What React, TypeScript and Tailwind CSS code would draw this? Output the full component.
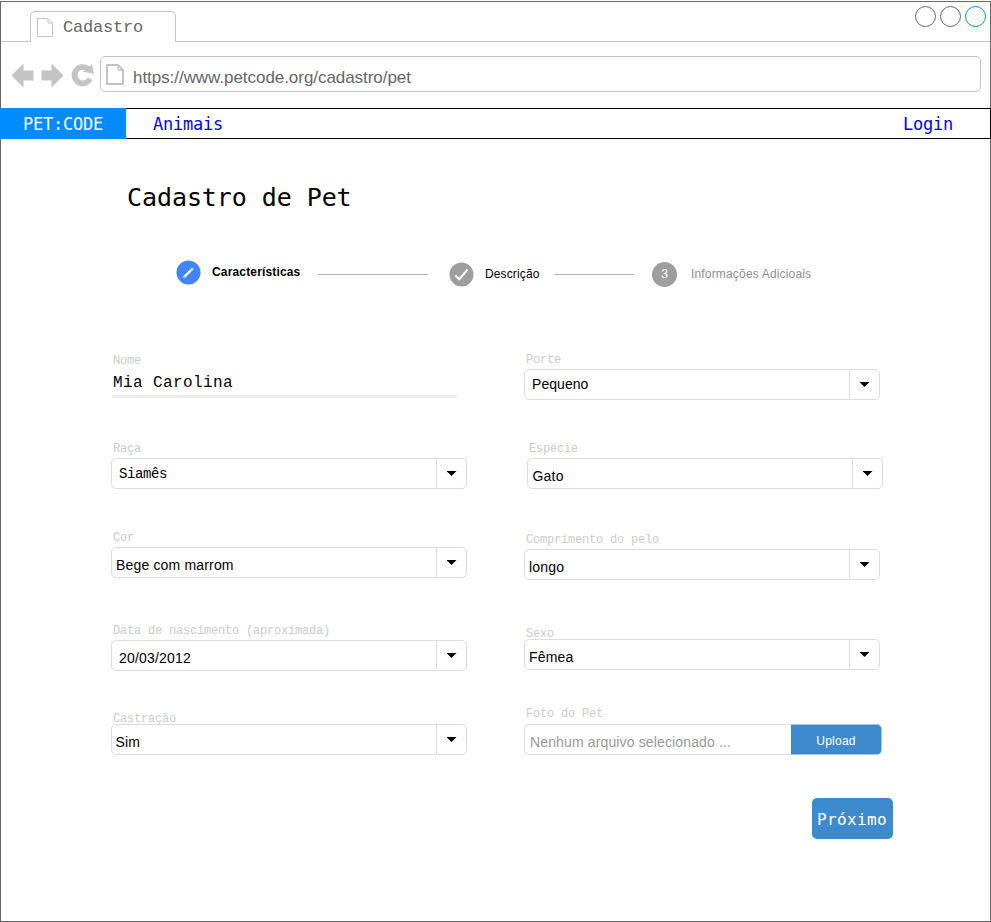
import type { ReactNode } from "react";

const sans = "font-['Liberation_Sans',sans-serif]";
const mono = "font-['Liberation_Mono',monospace]";
const dejavu = "font-['DejaVu_Sans_Mono',monospace]";

type FieldProps = {
  label: string;
  gap: string;
  labelHeight?: string;
  labelPad?: string;
  children: ReactNode;
};

function Field({ label, gap, labelHeight = "h-[15px]", labelPad = "pl-[2px]", children }: FieldProps) {
  return (
    <div className={gap}>
      <div className={`${mono} ${labelHeight} ${labelPad} text-[12px] leading-[12px] tracking-[-0.2px] whitespace-nowrap text-[#cccccc]`}>
        {label}
      </div>
      {children}
    </div>
  );
}

type SelectProps = { value: string; text?: string; font?: string; box?: string };

function Select({ value, text = "pl-1 pt-[9px] tracking-[0.17px]", font = sans, box = "" }: SelectProps) {
  return (
    <div className={`flex h-[31px] w-[356px] rounded-[5px] border border-[#dddddd] text-black ${box}`}>
      <div className={`${font} ${text} flex-1 text-[14px] leading-[16px] whitespace-nowrap`}>{value}</div>
      <div className="flex w-[30px] border-l border-[#dddddd] pt-[12px] pl-[10px]">
        <svg width="10" height="5" viewBox="0 0 10 5">
          <path d="M-.5 0H9.500L4.500 5Z" fill="#000" />
        </svg>
      </div>
    </div>
  );
}

function Header() {
  return (
    <header>
      <div className="flex h-[40px]">
        <div className="w-[29px] border-b border-[#c4c4c4]" />
        <div className="mt-[9px] flex w-[146px] rounded-t-[5px] border border-b-0 border-[#c4c4c4] pt-[6px] pl-[6px]">
          <svg width="17" height="20" viewBox="0 0 17 20" fill="none" stroke="#c4c4c4">
            <path d="M.5 .5H11L15.500 5V18.500H.5ZM11 .5V5H15.500" />
          </svg>
          <span className={`${mono} ml-[9px] text-[17px] leading-[20px] tracking-[-0.2px] text-[#666666]`}>Cadastro</span>
        </div>
        <div className="flex flex-1 justify-end gap-1 border-b border-[#c4c4c4] pt-[4px] pr-[4px]">
          <span className="size-[21px] rounded-full border border-[#666666]" />
          <span className="size-[21px] rounded-full border border-[#666666]" />
          <span className="size-[21px] rounded-full border border-[#008cff]" />
        </div>
      </div>
      <div className="flex pt-[14px] pl-[10px]">
        <svg className="mt-[6px]" width="83" height="28" viewBox="0 0 83 28" fill="#c4c4c4">
          <path d="M.5 13.500L12.500 1.500V8.500H22.500V18.500H12.500V25.500Z" />
          <path d="M52.500 13.500L40.500 1.500V8.500H30.500V18.500H40.500V25.500Z" />
          <path d="M80.800 2.500L82.800 12L71.500 9.500L74.200 8.200A5.400 5.400 0 1 0 76.800 15.500L81.500 18A11 11 0 1 1 78.500 4.600Z" />
        </svg>
        <div className="ml-[6px] flex h-[36px] w-[881px] rounded-[5px] border border-[#c4c4c4] pt-[7px] pl-[5px]">
          <svg width="18" height="21" viewBox="0 0 18 21" fill="none" stroke="#c4c4c4" strokeWidth="2">
            <path d="M1 1H12L17 6V20H1Z" />
            <path d="M12 1V6H17" strokeWidth="1.300" />
          </svg>
          <span className={`${sans} ml-[9px] pt-[4px] text-[17px] leading-[20px] tracking-[-0.05px] text-[#666666]`}>
            https://www.petcode.org/cadastro/pet
          </span>
        </div>
      </div>
    </header>
  );
}

function Nav() {
  return (
    <nav className={`${dejavu} -mx-px mt-[16px] flex h-[31px] text-[17px] leading-[32px] tracking-[-0.23px]`}>
      <div className="w-[126px] bg-[#008cff] pl-[23px] text-white">PET:CODE</div>
      <div className="flex flex-1 justify-between border-y border-r border-black pr-[37px] pl-[27px] leading-[30px] text-[#0000ff]">
        <a>Animais</a>
        <a>Login</a>
      </div>
    </nav>
  );
}

function Steps() {
  return (
    <div className={`${sans} mt-[43px] ml-[175px] flex h-[30px] text-[12px] leading-[14px] whitespace-nowrap`}>
      <svg className="mt-[4px]" width="25" height="25" viewBox="0 0 25 25">
        <circle cx="12.500" cy="12.500" r="12" fill="#4285f4" />
        <path d="M8.600 16.600L15 10.200M15.300 9.900L16.700 8.500" stroke="#fff" strokeWidth="2.300" />
        <path d="M7.300 17.800V15.600L9.500 17.600Z" fill="#fff" />
      </svg>
      <span className="mt-[9px] ml-[11px] w-[106px] font-bold tracking-[0.16px] text-black">Características</span>
      <div className="mt-[18px] h-px w-[110px] bg-[#b3b3b3]" />
      <svg className="mt-[6px] ml-[21px]" width="25" height="25" viewBox="0 0 25 25">
        <circle cx="12.500" cy="12.500" r="12" fill="#9e9e9e" />
        <path d="M6.300 13.500L10.300 17.300L18.500 7.500" fill="none" stroke="#fff" strokeWidth="2" />
      </svg>
      <span className="mt-[11px] ml-[11px] w-[69px] tracking-[0.13px] text-black">Descrição</span>
      <div className="mt-[18px] h-px w-[80px] bg-[#b3b3b3]" />
      <div className="mt-[6px] ml-[18px] size-[25px] rounded-full bg-[#9e9e9e] text-center leading-[25px] text-white">3</div>
      <span className="mt-[11px] ml-[14px] tracking-[0.17px] text-[#8f8f8f]">Informações Adicioais</span>
    </div>
  );
}

export default function App() {
  return (
    <div className="h-[922px] w-[991px] bg-white pt-px">
      <div className="h-[921px] border border-[#666666]">
        <Header />
        <Nav />
        <h1 className={`${dejavu} mt-[44px] ml-[126px] text-[25px] leading-[30px] tracking-[-0.08px] text-black`}>Cadastro de Pet</h1>
        <Steps />
        <form className="mt-[69px] flex pl-[110px]">
          <div className="w-[413px]">
            <Field label="Nome" gap="">
              <div className={`${mono} ml-px h-[28px] w-[345px] border-b-3 border-[#eeeeee] pt-[4px] pl-px text-[16px] leading-[18px] tracking-[0.4px] text-black`}>
                Mia Carolina
              </div>
            </Field>
            <Field label="Raça" gap="mt-[45px]">
              <Select value="Siamês" font={mono} text="pl-[7px] pt-[7px] tracking-[-0.4px]" />
            </Field>
            <Field label="Cor" gap="mt-[43px]">
              <Select value="Bege com marrom" />
            </Field>
            <Field label="Data de nascimento (aproximada)" gap="mt-[47px]">
              <Select value="20/03/2012" text="pl-[7px] pt-[9px] tracking-[0.2px]" />
            </Field>
            <Field label="Castração" gap="mt-[42px]" labelHeight="h-[11px]">
              <Select value="Sim" box="-ml-[0.5px]" />
            </Field>
          </div>
          <div className="-mt-px">
            <Field label="Porte" gap="">
              <Select value="Pequeno" text="pl-[7px] pt-[6px] tracking-[0.05px]" />
            </Field>
            <Field label="Espécie" gap="mt-[43px]" labelPad="pl-[5px]">
              <Select value="Gato" text="pl-[5px] pt-[9px] tracking-[0.2px]" box="ml-[2.5px]" />
            </Field>
            <Field label="Comprimento do pelo" gap="mt-[45px]">
              <Select value="longo" />
            </Field>
            <Field label="Sexo" gap="mt-[48px]" labelHeight="h-[11px]">
              <Select value="Fêmea" />
            </Field>
            <Field label="Foto do Pet" gap="mt-[38px]" labelHeight="h-[16px]">
              <div className={`${sans} flex h-[31px] w-[358px]`}>
                <div className="flex-1 rounded-l-[5px] border border-r-0 border-[#dddddd] pt-[9px] pl-[5px] text-[14px] leading-[16px] tracking-[0.14px] whitespace-nowrap text-[#999999]">
                  Nenhum arquivo selecionado ...
                </div>
                <div className="w-[91px] rounded-r-[5px] border-y border-r border-[#a9c6e0] bg-[#3d8bcd] pt-[9px] text-center text-[12px] leading-[14px] tracking-[0.25px] text-white">
                  Upload
                </div>
              </div>
            </Field>
            <button type="button" className={`${dejavu} mt-[43px] ml-[288px] block h-[41px] w-[81px] rounded-[5px] bg-[#3d8bcd] pt-[2px] pl-[5px] text-left text-[16px] tracking-[0.37px] text-white`}>
              Próximo
            </button>
          </div>
        </form>
      </div>
    </div>
  );
}
